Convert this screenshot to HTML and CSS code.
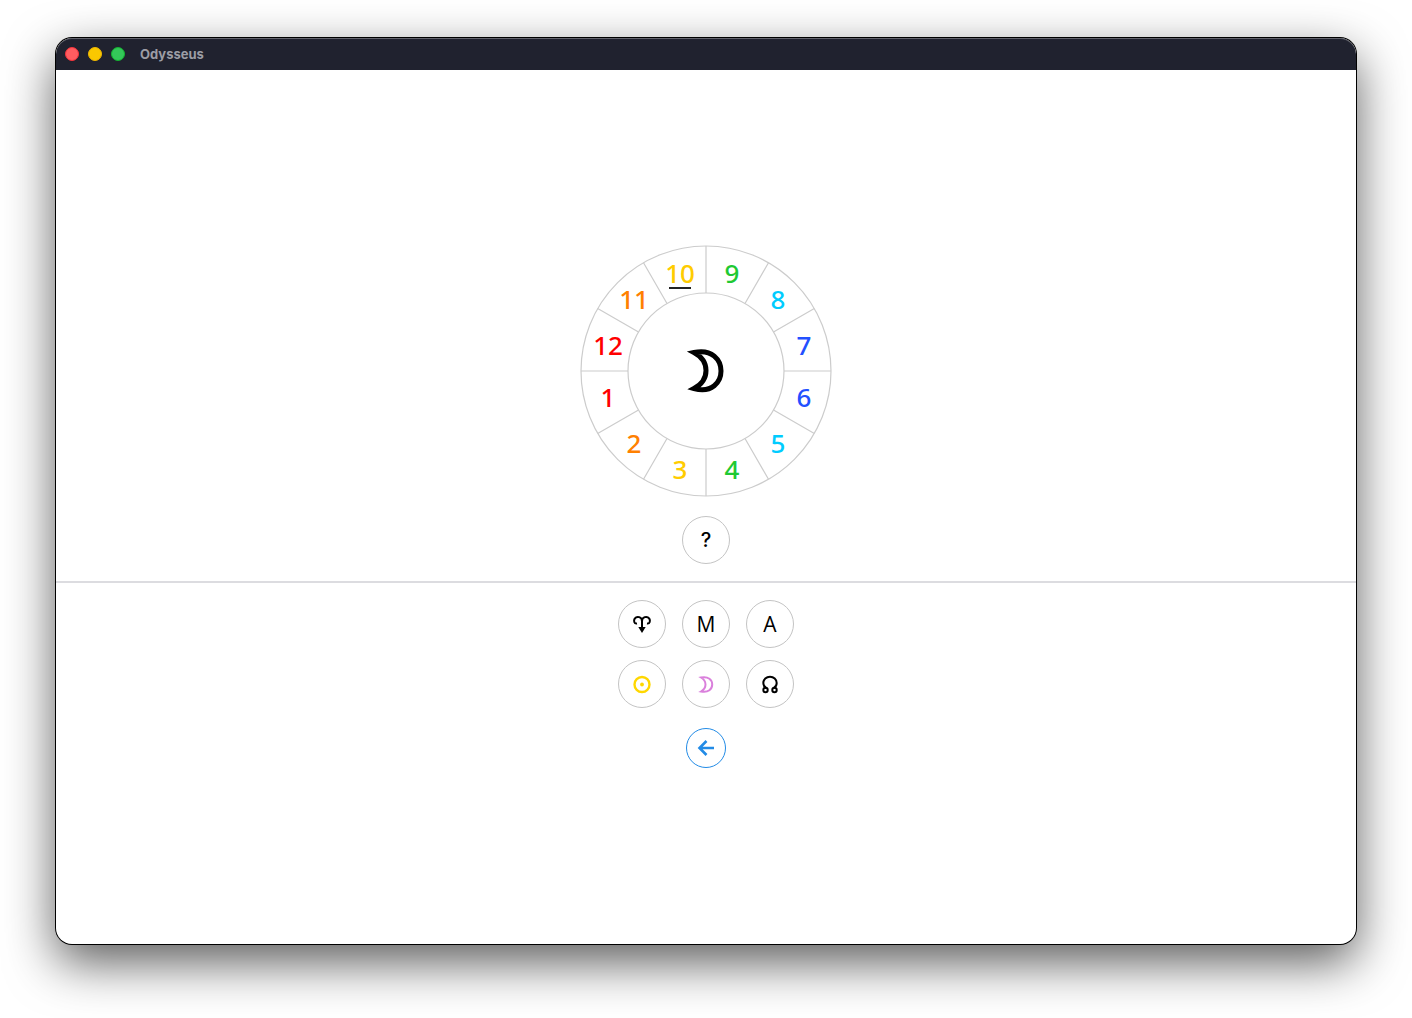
FILE: index.html
```html
<!DOCTYPE html>
<html lang="en">
<head>
    <meta charset="UTF-8">
    <title>Odysseus</title>
    <link rel="stylesheet" href="styles.css">
</head>
<body>

<div class="window">
    <header class="titlebar">
        <button class="dot close" aria-label="Close"></button>
        <button class="dot minimize" aria-label="Minimize"></button>
        <button class="dot zoom" aria-label="Zoom"></button>
        <h1>Odysseus</h1>
    </header>
    <main>
        <section class="question">
            <svg class="wheel" viewBox="-125 -125 250 250">
                <g class="ring">
                    <circle r="125"/>
                    <circle r="78"/>
                    <path d="M0-125V-78M0 78V125M-125 0H-78M78 0H125"/>
                    <path d="M62.5-108.3L39-67.5M108.3-62.5L67.5-39M108.3 62.5L67.5 39M62.5 108.3L39 67.5"/>
                    <path d="M-62.5-108.3L-39-67.5M-108.3-62.5L-67.5-39M-108.3 62.5L-67.5 39M-62.5 108.3L-39 67.5"/>
                </g>
                <!-- houses, counter-clockwise from the left -->
                <a href="#house1" class="red"><text x="-98" y="36">1</text></a>
                <a href="#house2" class="orange"><text x="-72" y="82">2</text></a>
                <a href="#house3" class="yellow"><text x="-26" y="108">3</text></a>
                <a href="#house4" class="green"><text x="26" y="108">4</text></a>
                <a href="#house5" class="cyan"><text x="72" y="82">5</text></a>
                <a href="#house6" class="blue"><text x="98" y="36">6</text></a>
                <a href="#house7" class="blue"><text x="98" y="-16">7</text></a>
                <a href="#house8" class="cyan"><text x="72" y="-62">8</text></a>
                <a href="#house9" class="green"><text x="26" y="-88">9</text></a>
                <a href="#house10" class="yellow"><text x="-26" y="-88">10</text></a>
                <a href="#house11" class="orange"><text x="-72" y="-62">11</text></a>
                <a href="#house12" class="red"><text x="-98" y="-16">12</text></a>
                <path class="current" d="M-37-83H-15"/>
                <path class="moon" d="M-12-18.5C6-22.500 15-11 15 0S6 22.500 -12 17.500C4 9 4-10-12-18.500Z"/>
            </svg>
            <button class="key help">?</button>
        </section>
        <section class="answers">
            <div class="keys">
                <button class="key" aria-label="Aries point">
                    <svg viewBox="0 0 24 24">
                        <path d="M7 11.500C4 12 3.500 8.500 4.700 6.600C7 3.500 12 5 12 9V18M17 11.500C20 12 20.500 8.500 19.300 6.600C17 3.500 12 5 12 9"/>
                        <path class="solid" d="M8.300 15H15.700L12 21Z"/>
                    </svg>
                </button>
                <button class="key letter">M</button>
                <button class="key letter">A</button>
                <button class="key sun" aria-label="Sun">
                    <svg viewBox="0 0 24 24">
                        <circle cx="12" cy="12.500" r="7.500"/>
                        <circle class="solid" cx="12" cy="12.500" r="1.900"/>
                    </svg>
                </button>
                <button class="key luna" aria-label="Moon">
                    <svg viewBox="0 0 24 24">
                        <path d="M7 5.500C14.500 4 18.200 8 18.200 12.500S14.500 21 7 19.500C13 16 13 9 7 5.500Z"/>
                    </svg>
                </button>
                <button class="key" aria-label="North node">
                    <svg viewBox="0 0 24 24">
                        <path d="M8.300 16.200C6.500 15 5.300 13 5.300 11A6.700 6.300 0 0 1 18.700 11C18.700 13 17.500 15 15.700 16.200"/>
                        <circle cx="7.500" cy="18" r="2.200"/>
                        <circle cx="16.500" cy="18" r="2.200"/>
                    </svg>
                </button>
            </div>
            <button class="key back" aria-label="Back">
                <svg viewBox="0 0 24 24">
                    <path d="M20 12H5.500M12.500 5L5.500 12L12.500 19"/>
                </svg>
            </button>
        </section>
    </main>
</div>

</body>
</html>
```

FILE: styles.css
```css
*{
    box-sizing: border-box;
    margin: 0;
    padding: 0;
}
body{
    min-height: 100vh;
    padding: 38px 56px 74px;
    display: flex;
    background-color: #fff;
    font-family: Inter, sans-serif;
}
.window{
    flex: 1;
    display: flex;
    flex-direction: column;
    border-radius: 16px;
    overflow: hidden;
    background-color: #fff;
    box-shadow: 0 0 0 1px #000, 0 18px 50px rgba(0,0,0,0.65);
}
.titlebar{
    height: 32px;
    padding-left: 9px;
    display: flex;
    align-items: center;
    gap: 9px;
    border-radius: 16px 16px 0 0;
    background-color: #20222f;
    box-shadow: inset 0 1px 0 #62636c;
}
.titlebar h1{
    margin-left: 6px;
    font-size: 13px;
    font-weight: 700;
    color: #9c9da5;
}
.dot{
    width: 14px;
    height: 14px;
    border: 1px solid;
    border-radius: 50%;
}
.close{
    background-color: #ff5c60;
    border-color: #f5333b;
}
.minimize{
    background-color: #fac800;
    border-color: #efb700;
}
.zoom{
    background-color: #34c759;
    border-color: #13b431;
}
main{
    flex: 1;
    display: flex;
    flex-direction: column;
    justify-content: center;
}
.question, .answers{
    display: flex;
    flex-direction: column;
    align-items: center;
    gap: 20px;
}
.question{
    padding-bottom: 17px;
    border-bottom: 2px solid #dcdce0;
}
.answers{
    padding-top: 17px;
}
/* wheel */
.wheel{
    width: 250px;
    height: 250px;
    overflow: visible;
}
.ring{
    fill: none;
    stroke: #ccc;
    stroke-width: 1.2;
}
.wheel text{
    font-family: "Noto Sans", sans-serif;
    font-size: 26px;
    font-weight: 500;
    text-anchor: middle;
}
.red{
    fill: #f00;
}
.orange{
    fill: #ff8000;
}
.yellow{
    fill: #ffcc00;
}
.green{
    fill: #1fc933;
}
.cyan{
    fill: #00ccff;
}
.blue{
    fill: #2350ff;
}
.current{
    stroke: #222;
    stroke-width: 2;
}
.moon{
    fill: none;
    stroke: #000;
    stroke-width: 5;
}
/* round buttons */
.keys{
    display: grid;
    grid-template-columns: repeat(3, 48px);
    gap: 12px 16px;
}
.key{
    width: 48px;
    height: 48px;
    display: flex;
    align-items: center;
    justify-content: center;
    border: 1px solid #c4c4c4;
    border-radius: 50%;
    background-color: #fff;
    color: #000;
    cursor: pointer;
}
.key svg{
    width: 24px;
    height: 24px;
    fill: none;
    stroke: currentColor;
    stroke-width: 2;
}
.key .solid{
    fill: currentColor;
    stroke: none;
}
.help{
    font-family: Inter, sans-serif;
    font-size: 20px;
    font-weight: 500;
}
.letter{
    font-family: "Open Sans", sans-serif;
    font-size: 21px;
    font-weight: 500;
}
.sun{
    color: #ffd700;
}
.sun svg{
    stroke-width: 2.4;
}
.luna{
    color: #da80dc;
}
.back{
    width: 40px;
    height: 40px;
    border-color: #228be6;
    color: #228be6;
}
.back svg{
    stroke-width: 2.6;
}
```
